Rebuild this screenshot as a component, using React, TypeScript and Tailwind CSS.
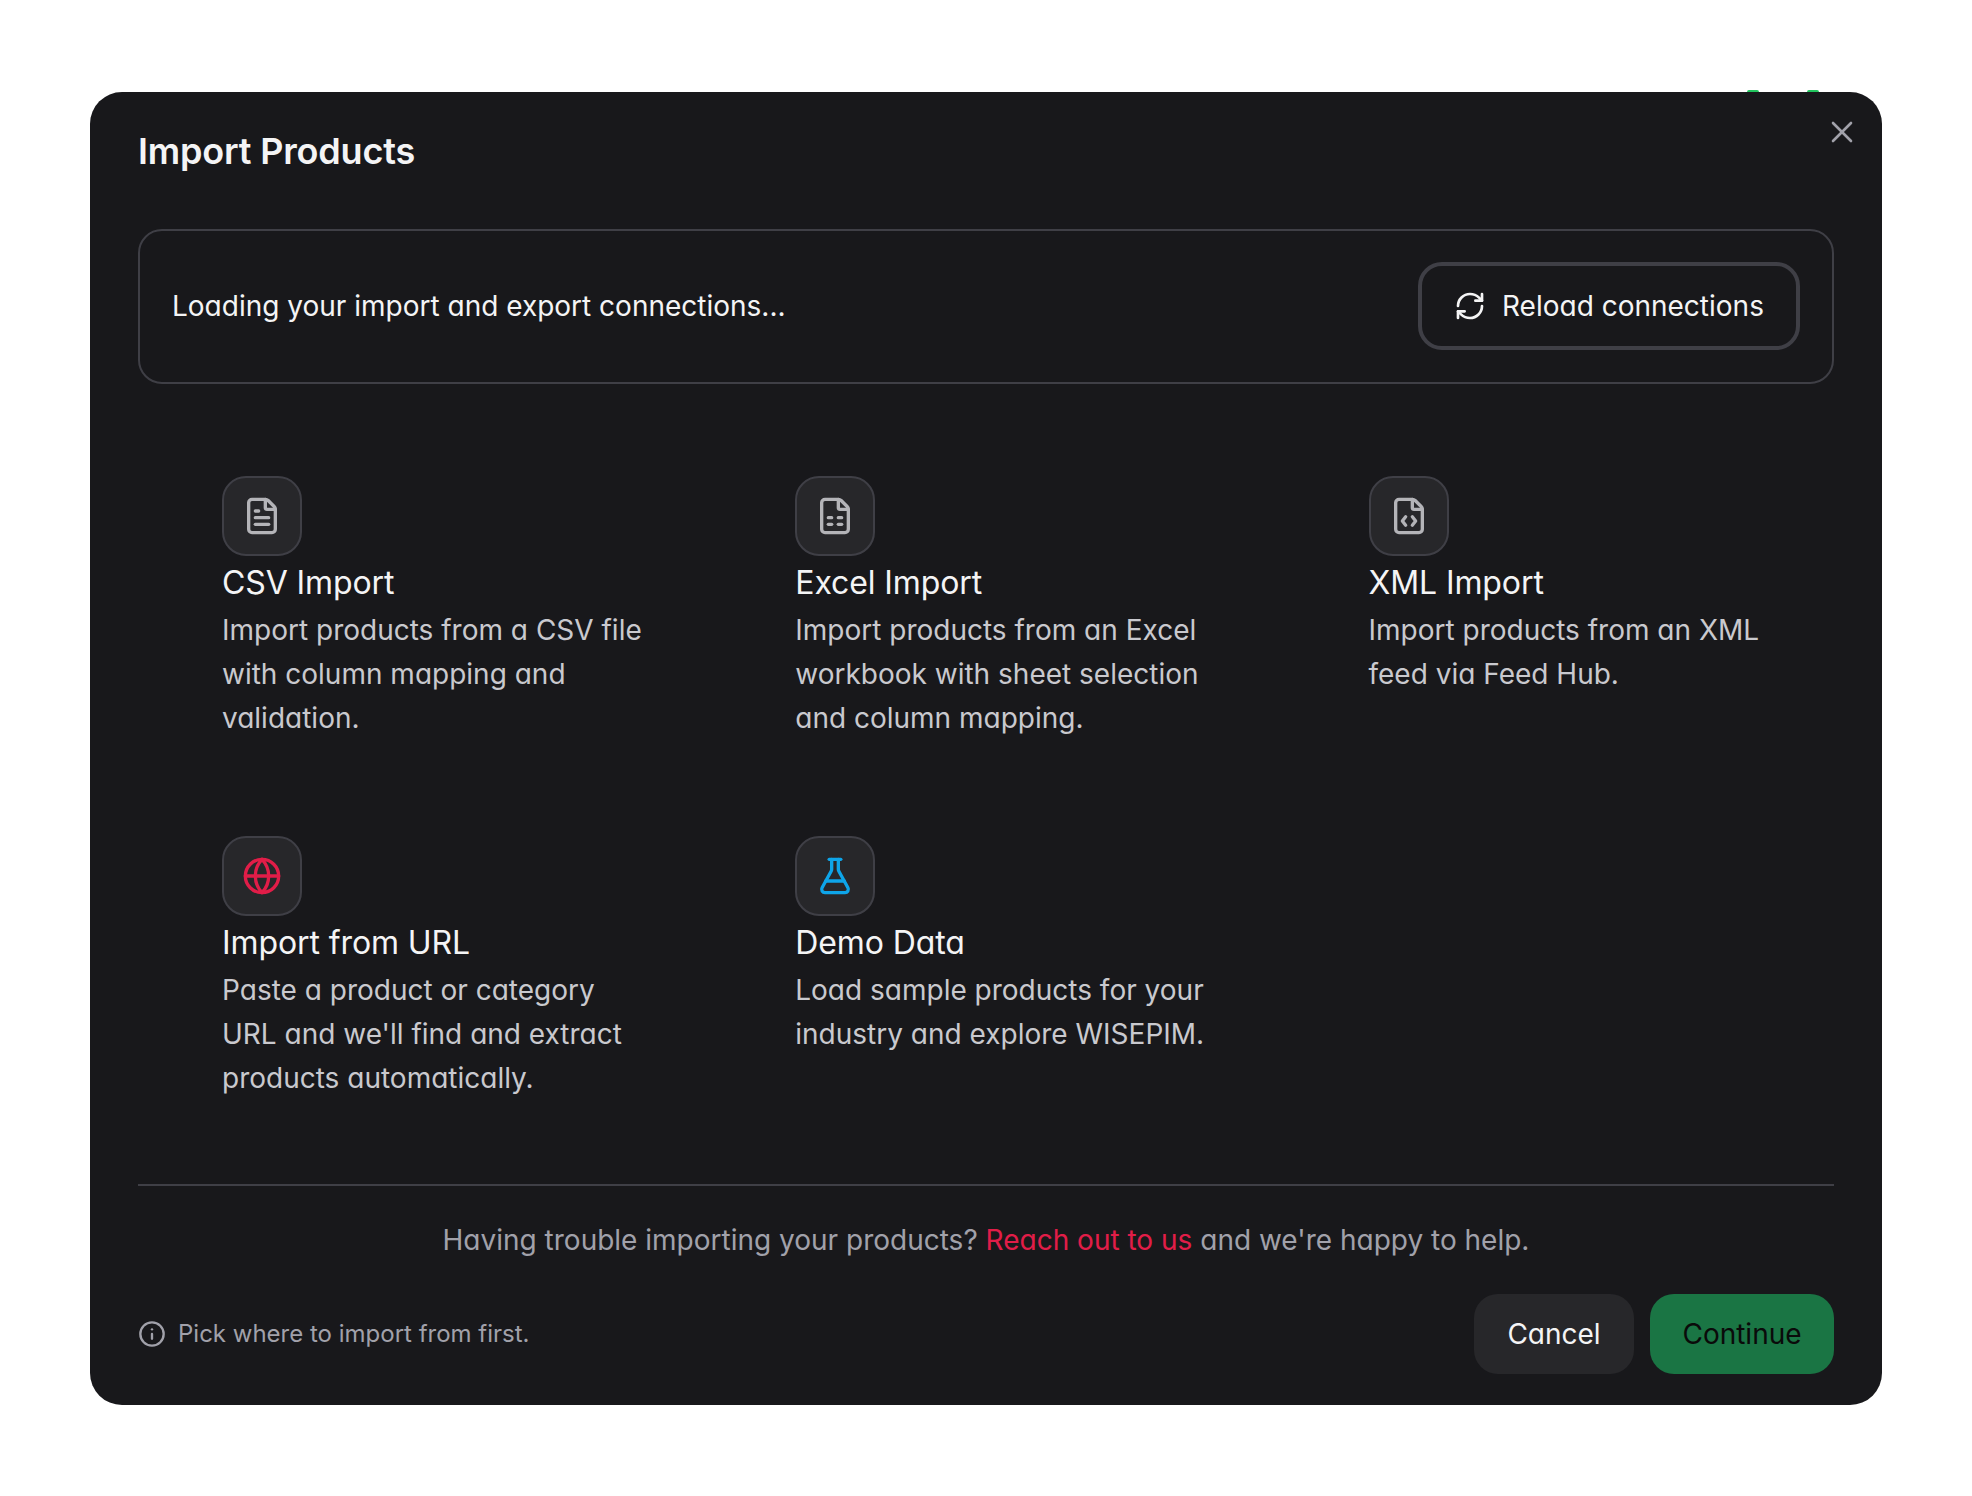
import { FileCode, FileSpreadsheet, FileText, FlaskConical, Globe, Info, RefreshCw, X } from "lucide-react";
import type { ReactNode } from "react";

type Source = {
  title: string;
  lines: string[];
  icon: ReactNode;
};

const sources: Source[] = [
  {
    title: "CSV Import",
    lines: ["Import products from a CSV file", "with column mapping and", "validation."],
    icon: <FileText size={40} strokeWidth={2} className="text-[#b4b4b8]" />,
  },
  {
    title: "Excel Import",
    lines: ["Import products from an Excel", "workbook with sheet selection", "and column mapping."],
    icon: <FileSpreadsheet size={40} strokeWidth={2} className="text-[#b4b4b8]" />,
  },
  {
    title: "XML Import",
    lines: ["Import products from an XML", "feed via Feed Hub."],
    icon: <FileCode size={40} strokeWidth={2} className="text-[#b4b4b8]" />,
  },
  {
    title: "Import from URL",
    lines: ["Paste a product or category", "URL and we'll find and extract", "products automatically."],
    icon: <Globe size={40} strokeWidth={2} className="text-[#e11d48]" />,
  },
  {
    title: "Demo Data",
    lines: ["Load sample products for your", "industry and explore WISEPIM."],
    icon: <FlaskConical size={40} strokeWidth={2} className="text-[#0ea5e9]" />,
  },
];

function SourceCard({ source }: { source: Source }) {
  return (
    <div className="h-[264px]">
      <div className="flex h-20 w-20 items-center justify-center rounded-3xl border-2 border-[#3f3f46] bg-[#27272a]">
        {source.icon}
      </div>
      <h3 className="pt-0.5 text-[32px] leading-[50px] tracking-[-0.1px] text-[#f4f4f5]">{source.title}</h3>
      <p className="text-[28px] leading-[44px] text-[#c9c9ce]">
        {source.lines.map((line) => (
          <span key={line} className="block whitespace-nowrap">
            {line}
          </span>
        ))}
      </p>
    </div>
  );
}

export default function App() {
  return (
    <div className="min-h-screen bg-white pl-[90px] pt-[92px] font-['Inter',sans-serif] [font-feature-settings:'cv11']">
      <div className="relative h-[1313px] w-[1792px] rounded-[32px] bg-[#18181b] px-12 pt-9">
        <span className="absolute -top-0.5 left-[1657px] h-0.5 w-3 rounded-t bg-[#22c55e]" />
        <span className="absolute -top-0.5 left-[1717px] h-0.5 w-3 rounded-t bg-[#22c55e]" />
        <button className="absolute right-[22px] top-[22px] text-[#a1a1aa]">
          <X size={36} strokeWidth={1.75} />
        </button>

        <h2 className="text-[36px] font-semibold leading-[46px] tracking-[-0.18px] text-[#f4f4f5]">Import Products</h2>

        <div className="mt-[55px] flex h-[155px] items-center justify-between rounded-3xl border-2 border-[#3f3f46] px-8 pb-0.5">
          <p className="text-[28px] text-[#f4f4f5]">Loading your import and export connections...</p>
          <button className="flex h-[88px] w-[382px] items-center gap-4 rounded-3xl border-4 border-[#3f3f46] pl-8 text-[28px] text-[#f4f4f5]">
            <RefreshCw size={32} strokeWidth={2} />
            Reload connections
          </button>
        </div>

        <div className="mt-[92px] grid grid-cols-[repeat(3,460px)] gap-x-[113.25px] gap-y-24 pl-[84px]">
          {sources.map((source) => (
            <SourceCard key={source.title} source={source} />
          ))}
        </div>

        <div className="mt-[84px] h-0.5 bg-[#3f3f46]" />

        <p className="mt-8 text-center text-[28px] leading-[44px] text-[#a1a1aa]">
          Having trouble importing your products? <a className="text-[#e11d48]">Reach out to us</a> and we're happy to
          help.
        </p>

        <div className="mt-8 flex items-center justify-between">
          <div className="flex items-center gap-[12px] text-[24px] text-[#a1a1aa]">
            <Info size={28} strokeWidth={2} />
            <span>Pick where to import from first.</span>
          </div>
          <div className="flex gap-4">
            <button className="h-20 w-40 rounded-3xl bg-[#27272a] text-[28px] text-[#f4f4f5]">Cancel</button>
            <button className="h-20 w-[184px] rounded-3xl bg-[#1a7544] text-[28px] text-[#0a0a0a]">Continue</button>
          </div>
        </div>
      </div>
    </div>
  );
}
